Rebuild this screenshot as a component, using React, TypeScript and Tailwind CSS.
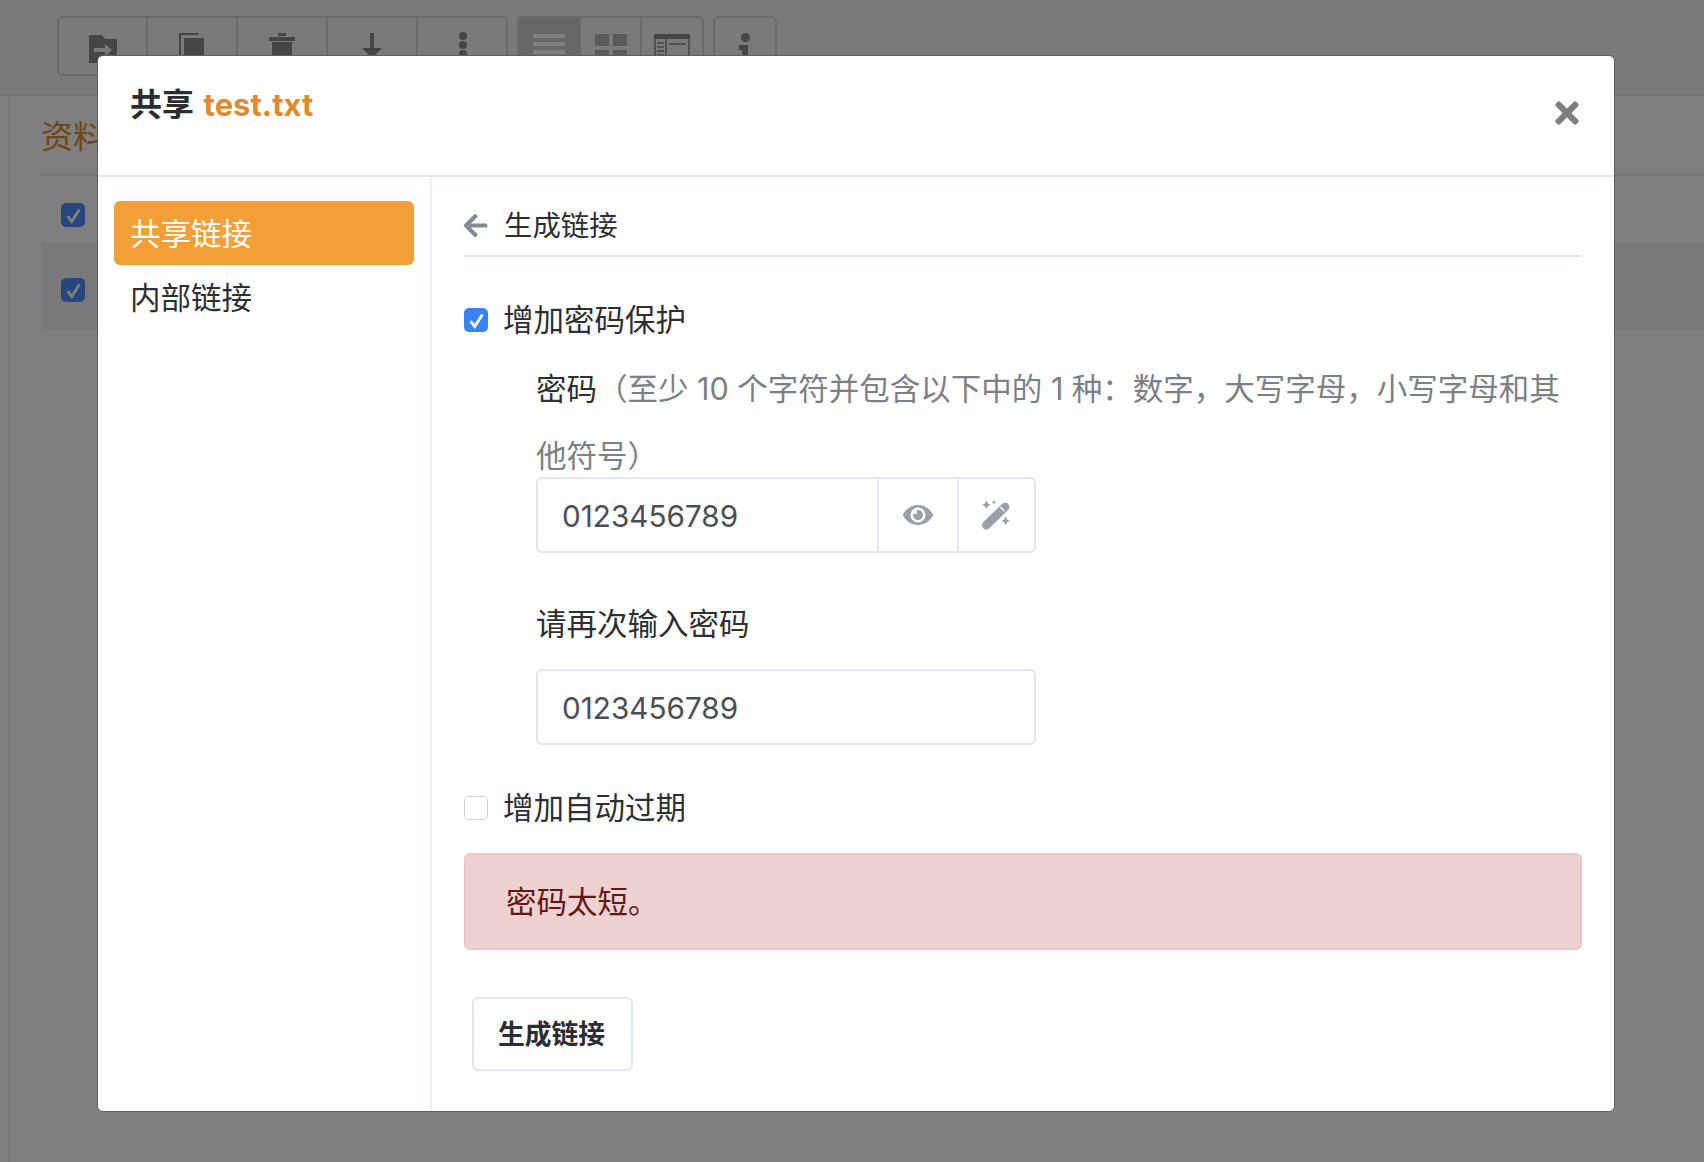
import { FaArrowLeft, FaEye, FaTimes } from "react-icons/fa";
import type { ReactNode } from "react";

const FONT = "[font-family:Inter,'Noto_Sans_CJK_SC',sans-serif]";

const FolderMove = () => (
  <svg viewBox="0 0 28 28" className="mt-[3px] h-[28px] w-[28px] fill-[#8a8a8a]">
    <path d="M0 0h13l3 4h12v24H0z" />
    <path d="M5 13h11V9l7 6-7 6v-4H5z" fill="#f5f5f5" />
  </svg>
);

const CopyIcon = () => (
  <svg viewBox="0 0 26 34" className="mt-px h-[34px] w-[26px] fill-[#8a8a8a]">
    <path d="M0 0h20v2H2v32H0z" />
    <path d="M5 5h20v29H5z" />
  </svg>
);

const TrashIcon = () => (
  <svg viewBox="0 0 26 34" className="mt-px h-[34px] w-[26px] fill-[#8a8a8a]">
    <path d="M9 0h8v3H9zM0 4h26v4H0zM3 9h20v25H3z" />
  </svg>
);

const DownArrow = () => (
  <svg viewBox="0 0 20 34" className="mt-px h-[34px] w-[20px] fill-[#8a8a8a]">
    <path d="M8 0h4v15h8L10 25 0 15h8z" />
  </svg>
);

const DotsIcon = () => (
  <svg viewBox="0 0 8 30" className="ml-[2px] h-[30px] w-[8px] fill-[#8a8a8a]">
    <circle cx="4" cy="4" r="4" />
    <circle cx="4" cy="13" r="4" />
    <circle cx="4" cy="22" r="4" />
  </svg>
);

const ListIcon = () => (
  <svg viewBox="0 0 32 32" className="mt-[2px] h-[32px] w-[32px] fill-[#ffffff]">
    <path d="M0 0h32v4.300H0zM0 8h32v4.300H0zM0 16h32v4.300H0zM0 24h32v4.300H0z" />
  </svg>
);

const GridIcon = () => (
  <svg viewBox="0 0 32 32" className="mt-[2px] h-[32px] w-[32px] fill-[#b5b5b5]">
    <path d="M0 0h14v12H0zM18 0h14v12H18zM0 16h14v12H0zM18 16h14v12H18z" />
  </svg>
);

const ColumnsIcon = () => (
  <svg viewBox="0 0 36 36" className="mt-[2px] h-[36px] w-[36px]">
    <rect x="1" y="1" width="34" height="34" fill="none" stroke="#8a8a8a" strokeWidth="1.5" />
    <path d="M0 0h36v5H0z" fill="#8a8a8a" />
    <path d="M12 5v30" stroke="#8a8a8a" strokeWidth="1.5" />
    <path d="M3 9h7M3 13h7M3 17h7M3 21h7M15 10h17" stroke="#8a8a8a" strokeWidth="1.5" />
  </svg>
);

const InfoIcon = () => (
  <svg viewBox="0 0 12 34" className="mt-px h-[34px] w-[12px] fill-[#8a8a8a]">
    <circle cx="6.500" cy="4.500" r="4.500" />
    <path d="M0 12h9v22H3V17H0z" />
  </svg>
);

const MagicWand = () => (
  <svg viewBox="0 0 28 28" className="-ml-[2px] h-[30px] w-[30px] fill-[#9a9fa8]">
    <path d="M5 23.500L22.500 6.500" stroke="#9a9fa8" strokeWidth="8" strokeLinecap="round" />
    <path d="M18 6.500l4 4" stroke="#ffffff" strokeWidth="1.200" />
    <path d="M5 0.500l1.300 2.700L9 4.500 6.300 5.800 5 8.500 3.700 5.800 1 4.500l2.700-1.300zM12 0l.7 1.300 1.300.7-1.300.7L12 4l-.7-1.300L10 2l1.300-.7zM23 15.500l1.300 2.700L27 19.500l-2.700 1.300L23 23.500l-1.300-2.700L19 19.500l2.700-1.300z" />
  </svg>
);

const CheckMark = () => (
  <svg viewBox="0 0 16 16" className="h-[19px] w-[19px] fill-none stroke-white stroke-[2.4]">
    <path d="M3 8.500l3.500 4.500L13 3" />
  </svg>
);

const ToolButton = ({ children, active, width }: { children: ReactNode; active?: boolean; width: string }) => (
  <div className={`flex items-start justify-center pt-[14px] ${width} ${active ? "bg-[#cfcfcf]" : ""}`}>
    {children}
  </div>
);

const Checkbox = ({ checked }: { checked?: boolean }) =>
  checked ? (
    <span className="flex h-[24px] w-[24px] items-center justify-center rounded-[5px] bg-[#3b82f6]">
      <CheckMark />
    </span>
  ) : (
    <span className="h-[24px] w-[24px] rounded-[5px] border border-[#cfcfcf] bg-white" />
  );

const CheckRow = ({ checked, label }: { checked?: boolean; label: string }) => (
  <label className="flex h-[40px] items-center gap-[15px] text-[30.5px] leading-[40px] text-[#2d2f33]">
    <Checkbox checked={checked} />
    {label}
  </label>
);

const inputClass =
  "h-full w-full bg-transparent px-[24px] pt-[2px] text-[29.7px] text-[#4a4f57] outline-none " + FONT;

export default function App() {
  return (
    <div className={`relative h-[1162px] w-[1704px] overflow-hidden bg-white ${FONT}`}>
      {/* page behind the dialog */}
      <div className="flex h-[96px] gap-[9px] border-b-2 border-[#e9e9e9] bg-[#f5f5f5] pl-[57px] pt-[16px]">
        <div className="flex h-[60px] divide-x-2 divide-[#d4d4d4] rounded-[5px] border-2 border-[#d4d4d4]">
          <ToolButton width="w-[89px]"><FolderMove /></ToolButton>
          <ToolButton width="w-[90px]"><CopyIcon /></ToolButton>
          <ToolButton width="w-[90px]"><TrashIcon /></ToolButton>
          <ToolButton width="w-[90px]"><DownArrow /></ToolButton>
          <ToolButton width="w-[88px]"><DotsIcon /></ToolButton>
        </div>
        <div className="flex h-[60px] divide-x-2 divide-[#d4d4d4] rounded-[5px] border-2 border-[#d4d4d4]">
          <ToolButton active width="w-[62px]"><ListIcon /></ToolButton>
          <ToolButton width="w-[61px]"><GridIcon /></ToolButton>
          <ToolButton width="w-[60px]"><ColumnsIcon /></ToolButton>
        </div>
        <div className="flex h-[60px] rounded-[5px] border-2 border-[#d4d4d4]">
          <ToolButton width="w-[60px]"><InfoIcon /></ToolButton>
        </div>
      </div>
      <div className="ml-[8px] h-[1066px] border-l-2 border-[#efefef] pl-[31px]">
        <div className="flex h-[80px] items-center border-b-2 border-[#e9e9e9] pt-[4px] text-[32px] text-[#e08a2f]">资料夹</div>
        <div className="flex h-[69px] items-center border-b-2 border-[#efefef] pl-[20px] pt-[11px]">
          <span className="flex h-[24px] w-[24px] items-center justify-center rounded-[5px] bg-[#4f8df7]">
            <CheckMark />
          </span>
        </div>
        <div className="flex h-[85px] items-center bg-[#f2f3f6] pl-[20px] pt-[5px]">
          <span className="flex h-[24px] w-[24px] items-center justify-center rounded-[5px] bg-[#4f8df7]">
            <CheckMark />
          </span>
        </div>
      </div>
      <div className="absolute inset-0 bg-black/50" />

      {/* share dialog */}
      <div className="absolute left-[97px] top-[55px] flex h-[1057px] w-[1518px] flex-col rounded-[6px] border border-[#5f5f5f] bg-white">
        <div className="flex h-[121px] shrink-0 justify-between border-b-2 border-[#e2e6ee] pl-[32px] pr-[30px]">
          <h4 className="pt-[25px] text-[32px] font-bold leading-[48px] text-[#2b2d31]">
            共享 <span className="ml-[2px] text-[31px] text-[#e08a2f]">test.txt</span>
          </h4>
          <button className="mt-[40px] h-[34px] text-[#7f7f7f]">
            <FaTimes className="h-[34px] w-[34px]" />
          </button>
        </div>
        <div className="flex min-h-0 flex-1">
          <div className="w-[334px] shrink-0 border-r-2 border-[#edf0f4] pl-[16px] pr-[16px] pt-[24px]">
            <div className="flex h-[64px] items-center rounded-[6px] bg-[#f39f37] px-[16px] pt-[2px] text-[30.5px] text-white">共享链接</div>
            <div className="mt-px flex h-[64px] items-center px-[16px] text-[30.5px] text-[#2d2f33]">内部链接</div>
          </div>
          <div className="flex-1 pl-[32px] pr-[32px] pt-[24px]">
            <div className="flex h-[56px] items-start gap-[15px] border-b-2 border-[#e2e6ee] pt-[5px] text-[28.4px] leading-[40px] text-[#2d2f33]">
              <FaArrowLeft className="-ml-[2px] mt-[6px] h-[27px] w-[27px] text-[#858b94]" />
              生成链接
            </div>
            <div className="mt-[43px]">
              <CheckRow checked label="增加密码保护" />
            </div>
            <div className="ml-[72px] mt-[15px] h-[122px] text-[30.5px] leading-[67px] text-[#2d2f33]">
              密码<span className="text-[#7c7f85]">（至少 10 个字符并包含以下中的 1 种：数字，大写字母，小写字母和其他符号）</span>
            </div>
            <div className="ml-[72px] flex h-[76px] w-[500px] rounded-[6px] border-2 border-[#e2e6ee]">
              <div className="w-[339px]"><input readOnly value="0123456789" className={inputClass} /></div>
              <div className="flex w-[80px] items-center justify-center border-l-2 border-[#e2e6ee] text-[#9a9fa8]">
                <FaEye className="h-[28px] w-[30px]" />
              </div>
              <div className="flex flex-1 items-center justify-center border-l-2 border-[#e2e6ee]">
                <MagicWand />
              </div>
            </div>
            <div className="ml-[72px] mt-[51px] h-[40px] text-[30.5px] leading-[40px] text-[#2d2f33]">请再次输入密码</div>
            <div className="ml-[72px] mt-[25px] h-[76px] w-[500px] rounded-[6px] border-2 border-[#e2e6ee]">
              <input readOnly value="0123456789" className={inputClass} />
            </div>
            <div className="mt-[43px]">
              <CheckRow label="增加自动过期" />
            </div>
            <div className="mt-[25px] flex h-[97px] items-center rounded-[6px] border-2 border-[#ebc5c7] bg-[#eed2d2] pl-[40px] text-[30.5px] text-[#651616]">
              密码太短。
            </div>
            <button className="ml-[8px] mt-[47px] h-[74px] w-[161px] rounded-[6px] border-2 border-[#e2e6ee] bg-white pr-[2px] text-[26.800px] font-bold text-[#2b2d31]">
              生成链接
            </button>
          </div>
        </div>
      </div>
    </div>
  );
}
